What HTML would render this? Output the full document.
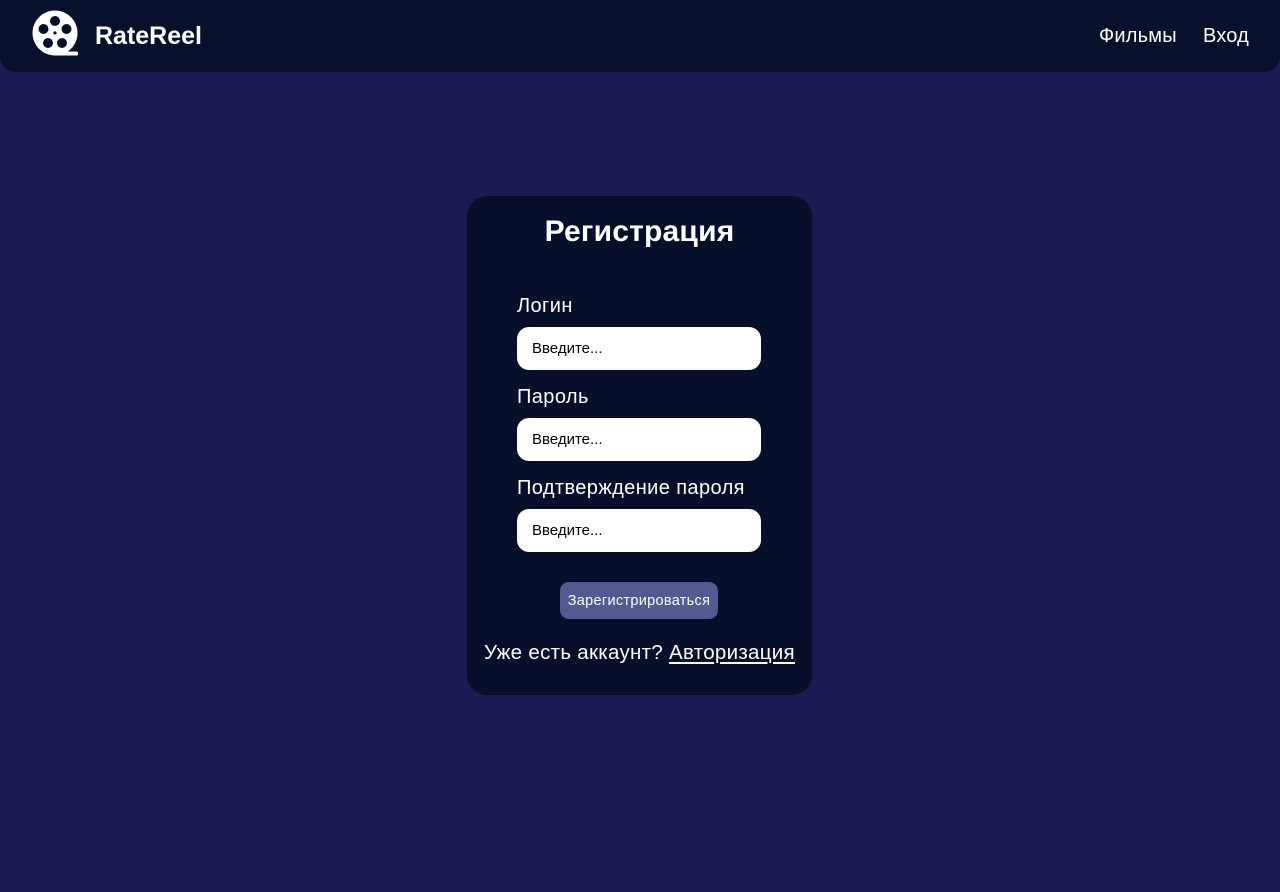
<!DOCTYPE html>
<html><head><meta charset="utf-8"><style>
*{margin:0;padding:0;box-sizing:border-box}
body{width:1280px;height:892px;background:#1c1a55;font-family:"Liberation Sans",Arial,sans-serif;color:#fff;position:relative;overflow:hidden}
.hdr{position:absolute;left:0;top:0;width:1280px;height:72px;background:#08102b;border-radius:0 0 16px 16px}
.brand{position:absolute;left:95px;top:22px;font-size:25px;font-weight:bold}
.nav{position:absolute;top:25px;font-size:20px;letter-spacing:0.2px}
.card{position:absolute;left:467px;top:196px;width:345px;height:499px;background:#080f2b;border-radius:20px}
h1{position:absolute;left:0;width:345px;text-align:center;top:19px;font-size:30px;letter-spacing:0.2px}
.lbl{position:absolute;left:50px;font-size:20px;letter-spacing:0.4px}
.inp{position:absolute;left:50px;width:244px;height:43px;background:#fff;border-radius:12px;color:#000;font-size:15px;padding:13px 15px}
.btn{position:absolute;left:93px;top:386px;width:158px;height:37px;background:#525a91;border-radius:9px;font-size:14.5px;letter-spacing:0.3px;text-align:center;line-height:38px;white-space:nowrap}
.bot{position:absolute;left:0;width:345px;text-align:center;top:445px;font-size:20.5px;letter-spacing:0.3px;white-space:nowrap}
.bot u{text-underline-offset:3px}
</style></head><body>
<div class="hdr">
<svg style="position:absolute;left:32px;top:10px" width="48" height="48" viewBox="0 0 48 48">
<circle cx="23" cy="23" r="22.5" fill="#fff"/>
<circle cx="23" cy="11" r="5" fill="#08102b"/>
<circle cx="11.5" cy="19" r="5" fill="#08102b"/>
<circle cx="34.5" cy="19" r="5" fill="#08102b"/>
<circle cx="16" cy="33" r="5" fill="#08102b"/>
<circle cx="30" cy="33" r="5" fill="#08102b"/>
<circle cx="23" cy="23" r="1.6" fill="#08102b"/>
<rect x="23" y="41.5" width="23" height="4" rx="1.5" fill="#fff"/>
</svg>
<div class="brand">RateReel</div>
<div class="nav" style="left:1099px">Фильмы</div>
<div class="nav" style="left:1203px">Вход</div>
</div>
<div class="card">
<h1>Регистрация</h1>
<div class="lbl" style="top:99px">Логин</div>
<div class="inp" style="top:131px">Введите...</div>
<div class="lbl" style="top:190px">Пароль</div>
<div class="inp" style="top:222px">Введите...</div>
<div class="lbl" style="top:281px">Подтверждение пароля</div>
<div class="inp" style="top:313px">Введите...</div>
<div class="btn">Зарегистрироваться</div>
<div class="bot">Уже есть аккаунт? <u>Авторизация</u></div>
</div>
</body></html>
